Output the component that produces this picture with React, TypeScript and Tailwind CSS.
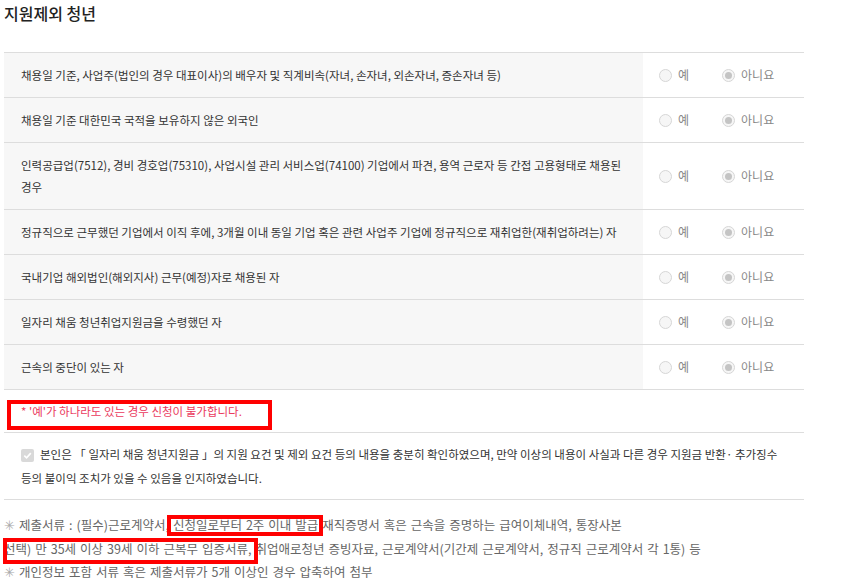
import React from "react";

const ROWS = [
  "채용일 기준, 사업주(법인의 경우 대표이사)의 배우자 및 직계비속(자녀, 손자녀, 외손자녀, 증손자녀 등)",
  "채용일 기준 대한민국 국적을 보유하지 않은 외국인",
  "인력공급업(7512), 경비 경호업(75310), 사업시설 관리 서비스업(74100) 기업에서 파견, 용역 근로자 등 간접 고용형태로 채용된 경우",
  "정규직으로 근무했던 기업에서 이직 후에, 3개월 이내 동일 기업 혹은 관련 사업주 기업에 정규직으로 재취업한(재취업하려는) 자",
  "국내기업 해외법인(해외지사) 근무(예정)자로 채용된 자",
  "일자리 채움 청년취업지원금을 수령했던 자",
  "근속의 중단이 있는 자",
];

function Radio({ checked, label }: { checked?: boolean; label: string }) {
  return (
    <label className="flex items-center gap-[6px] text-[12px] text-[#888]">
      <span className="flex h-[13px] w-[13px] items-center justify-center rounded-full border border-[#d6d6d6] bg-[#f6f6f6]">
        {checked && <span className="h-[7px] w-[7px] rounded-full bg-[#c4c4c4]" />}
      </span>
      {label}
    </label>
  );
}

export default function App() {
  return (
    <div
      className="w-[841px] bg-white pl-[4px] text-[#333]"
      style={{ fontFamily: '"Noto Sans CJK KR", "Noto Sans", sans-serif' }}
    >
      <h2 className="pt-[2px] text-[16px] font-medium leading-[22px] text-[#222]">지원제외 청년</h2>

      <div className="mt-[28px] w-[800px] border-t border-[#ddd]">
        {ROWS.map((q) => (
          <div key={q} className="flex border-b border-[#ddd]">
            <div className="w-[639px] bg-[#f7f7f7] py-[11px] pl-[17px] pr-[10px] text-[11.5px] leading-[22px]">
              {q}
            </div>
            <div className="flex flex-1 items-center gap-[33px] pl-[16px]">
              <Radio label="예" />
              <Radio checked label="아니요" />
            </div>
          </div>
        ))}

        <div className="relative border-b border-[#ddd] py-[10px] pl-[17px] text-[11.5px] leading-[22px] text-[#ea3a5e]">
          * &apos;예&apos;가 하나라도 있는 경우 신청이 불가합니다.
          <span className="pointer-events-none absolute left-[3px] top-[10px] h-[30px] w-[265px] border-[4px] border-[#ff0000]" />
        </div>

        <div className="border-b border-[#ddd] py-[9px] pl-[17px] pr-[22px] text-[11.5px] leading-[24px]">
          <span className="mr-[6px] inline-flex h-[13px] w-[13px] translate-y-[2px] items-center justify-center rounded-[2px] bg-[#d9d9d9] align-baseline">
            <svg viewBox="0 0 12 12" className="h-[11px] w-[11px]">
              <path d="M2.5 6.2 5 8.6 9.6 3.4" fill="none" stroke="#fff" strokeWidth="1.8" />
            </svg>
          </span>
          본인은 「 일자리 채움 청년지원금 」의 지원 요건 및 제외 요건 등의 내용을 충분히 확인하였으며, 만약 이상의 내용이 사실과 다른 경우 지원금 반환· 추가징수 등의 불이익 조치가 있을 수 있음을 인지하였습니다.
        </div>
      </div>

      <div className="relative pt-[13px] text-[12.5px] leading-[23.5px] text-[#666] [word-spacing:1.2px]">
        <p>
          <span className="text-[#aaa]">✳&#xFE0E;</span> 제출서류 : (필수)근로계약서, 신청일로부터 2주 이내 발급 재직증명서 혹은 근속을 증명하는 급여이체내역, 통장사본
        </p>
        <p>
          선택) 만 35세 이상 39세 이하 근복무 입증서류, 취업애로청년 증빙자료, 근로계약서(기간제 근로계약서, 정규직 근로계약서 각 1통) 등
        </p>
        <p>
          <span className="text-[#aaa]">✳&#xFE0E;</span> 개인정보 포함 서류 혹은 제출서류가 5개 이상인 경우 압축하여 첨부
        </p>
        <span className="pointer-events-none absolute left-[163px] top-[15px] h-[21px] w-[156px] border-[4px] border-[#ff0000]" />
        <span className="pointer-events-none absolute left-[-1px] top-[38px] h-[26px] w-[255px] border-[4px] border-[#ff0000]" />
      </div>
    </div>
  );
}
